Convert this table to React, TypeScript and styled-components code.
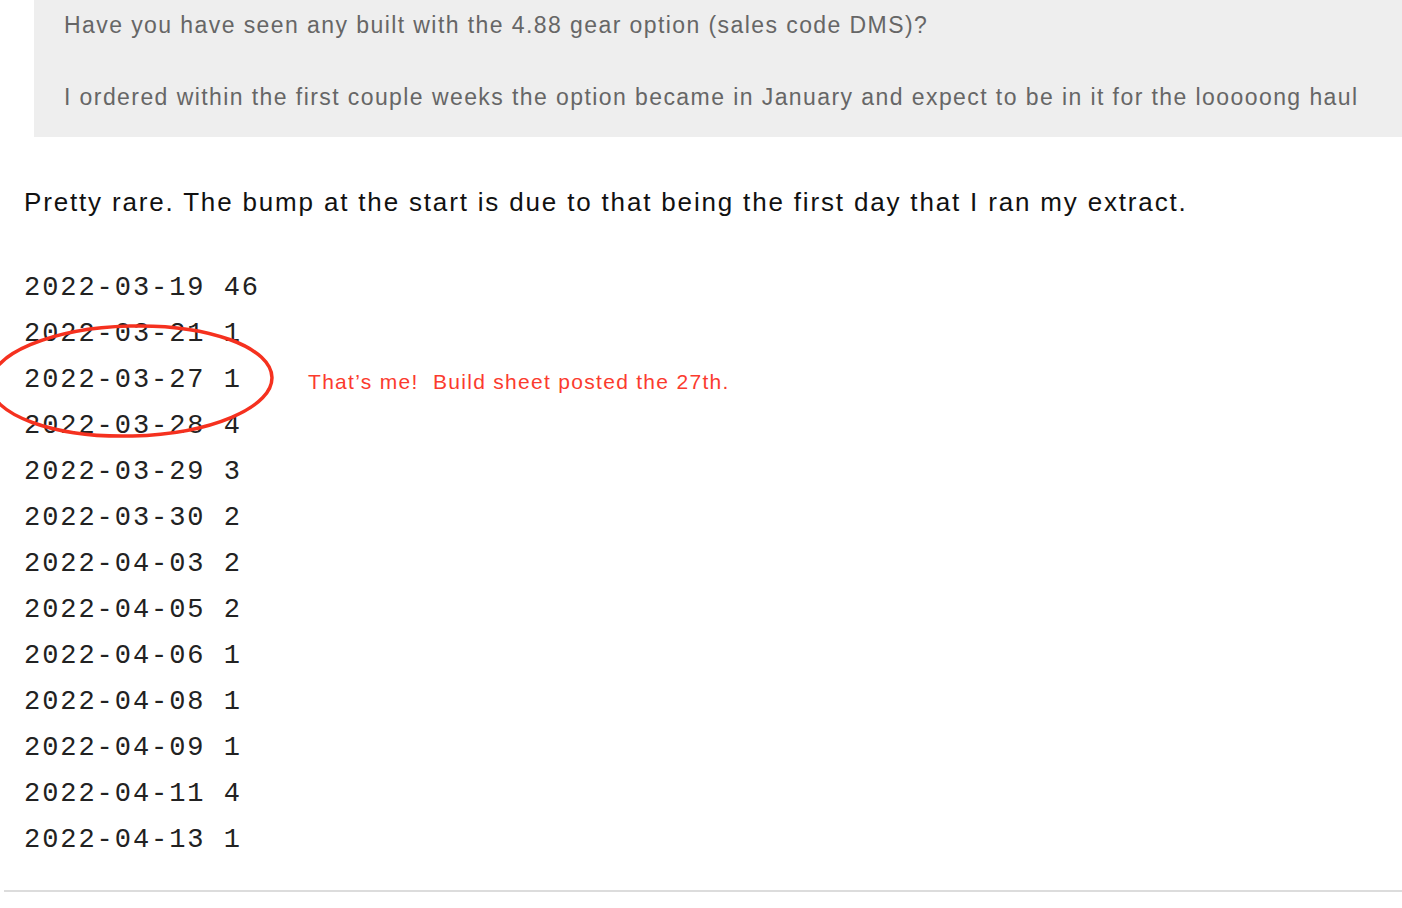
import React from "react";
import styled, { createGlobalStyle } from "styled-components";

const Global = createGlobalStyle`
  html, body { margin: 0; padding: 0; background: #fff; }
  body { font-family: "Liberation Sans", Arial, sans-serif; }
`;

const Page = styled.div`
  width: 1402px;
  height: 908px;
  overflow: hidden;
  display: flex;
  flex-direction: column;
`;

const Quote = styled.blockquote`
  margin: 0 0 0 34px;
  padding: 10px 30px 25px;
  background: #eeeeee;
  color: #666666;
  font-size: 23px;
  letter-spacing: 1.42px;
  display: flex;
  flex-direction: column;
  gap: 42px;
`;

const QuoteLine = styled.p`
  margin: 0;
  line-height: 30px;
  white-space: nowrap;
`;

const Body = styled.p`
  margin: 49px 0 0 24px;
  font-size: 26px;
  letter-spacing: 1.83px;
  line-height: 32px;
  color: #111;
  white-space: nowrap;
`;

const Code = styled.div`
  position: relative;
  margin: 47px 0 0 24px;
  display: flex;
  flex-direction: column;
`;

const Row = styled.div`
  display: flex;
  align-items: center;
  height: 46px;
`;

const Mono = styled.span`
  font-family: "Liberation Mono", "Courier New", monospace;
  font-size: 27px;
  letter-spacing: 1.95px;
  color: #222;
  width: 284px;
  white-space: pre;
`;

const Note = styled.span`
  color: #fb3b2e;
  font-size: 21px;
  letter-spacing: 1.3px;
  white-space: pre;
  margin-top: 4px;
`;

const Ellipse = styled.svg`
  position: absolute;
  left: -24px;
  top: 57px;
  pointer-events: none;
`;

const Rule = styled.hr`
  margin: 27px 0 0 4px;
  border: none;
  border-top: 2px solid #dcdcdc;
  height: 0;
`;

const rows: [string, string][] = [
  ["2022-03-19", "46"],
  ["2022-03-21", "1"],
  ["2022-03-27", "1"],
  ["2022-03-28", "4"],
  ["2022-03-29", "3"],
  ["2022-03-30", "2"],
  ["2022-04-03", "2"],
  ["2022-04-05", "2"],
  ["2022-04-06", "1"],
  ["2022-04-08", "1"],
  ["2022-04-09", "1"],
  ["2022-04-11", "4"],
  ["2022-04-13", "1"],
];

export default function App() {
  return (
    <Page>
      <Global />
      <Quote>
        <QuoteLine>Have you have seen any built with the 4.88 gear option (sales code DMS)?</QuoteLine>
        <QuoteLine>I ordered within the first couple weeks the option became in January and expect to be in it for the looooong haul</QuoteLine>
      </Quote>
      <Body>Pretty rare. The bump at the start is due to that being the first day that I ran my extract.</Body>
      <Code>
        {rows.map(([d, n]) => (
          <Row key={d}>
            <Mono>{`${d} ${n}`}</Mono>
            {d === "2022-03-27" && <Note>That’s me!  Build sheet posted the 27th.</Note>}
          </Row>
        ))}
        <Ellipse width="320" height="130" viewBox="0 0 320 130">
          <ellipse cx="131" cy="59" rx="141" ry="55" fill="none" stroke="#f5311f" strokeWidth="3.5" transform="rotate(-1.5 131 59)" />
        </Ellipse>
      </Code>
      <Rule />
    </Page>
  );
}
